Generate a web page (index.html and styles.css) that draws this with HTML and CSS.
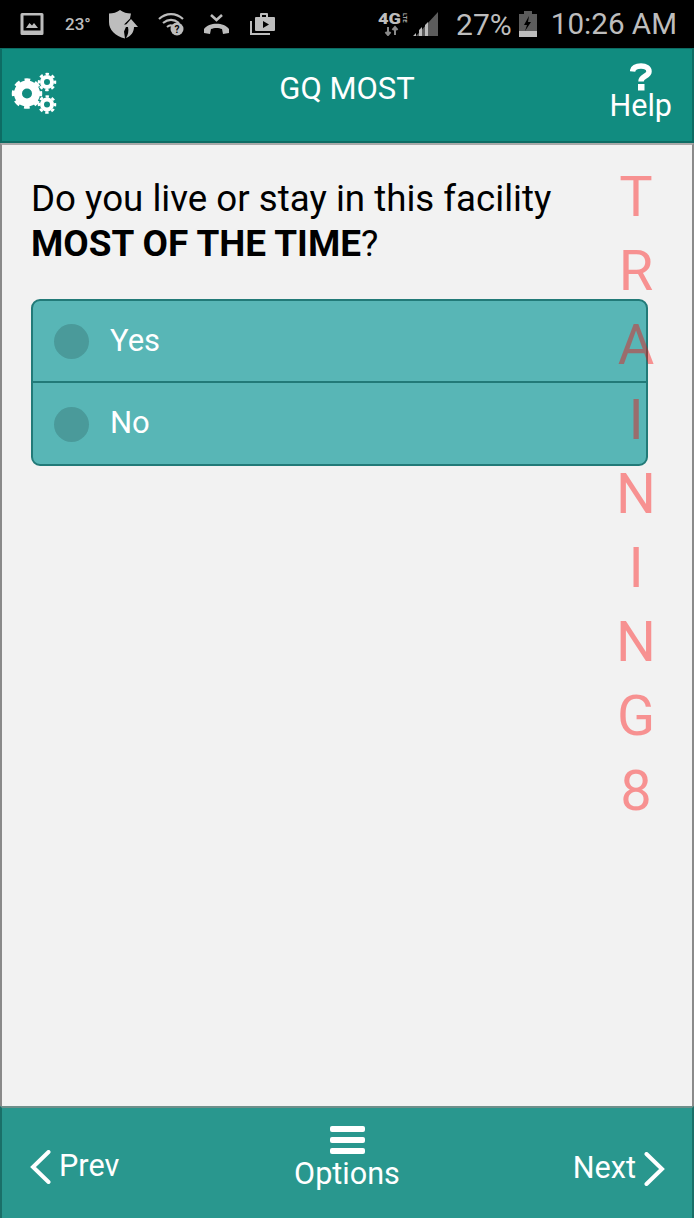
FILE: index.html
```
<!DOCTYPE html>
<html lang="en">
<head>
<meta charset="utf-8">
<title>GQ MOST</title>
<link rel="stylesheet" href="styles.css">
</head>
<body>
<div class="phone">
  <div class="status">
    <div class="status-left">
      <svg class="si pic" viewBox="0 0 24 24"><path fill="#bdbdbd" fill-rule="evenodd" d="M2 1h20a1.500 1.500 0 0 1 1.500 1.500v19a1.500 1.500 0 0 1-1.500 1.500H2a1.500 1.500 0 0 1-1.500-1.500v-19A1.500 1.500 0 0 1 2 1zm1.500 2.500v15h17v-15zM6 16l3.500-5 2.500 2.500 2-2.500 4 5z"/></svg>
      <span class="temp">23°</span>
      <svg class="si shield" viewBox="0 0 29 29"><path fill="#bdbdbd" d="M11 0c3 2.500 7 3.500 11 3.500l-1 5-6 6h3l-3 7 1 7C6 26 0 20 0 12V3.500C4 3.500 8 2.500 11 0z"/><path fill="#bdbdbd" d="M22 9l7 8h-4c0 5-3 9-8 11 2-3 3-7 2-11h-4z"/></svg>
      <svg class="si wifi" viewBox="0 0 26 24"><g fill="none" stroke="#bdbdbd" stroke-width="2.200"><path d="M1 7c7-6.500 17-6.500 24 0"/><path d="M5 11c5-4 11-4 16 0"/><path d="M9 15c2.500-2 5-2 7 0"/></g><circle cx="19" cy="17" r="6.500" fill="#bdbdbd"/><text x="19" y="21" class="q">?</text></svg>
      <svg class="si call" viewBox="0 0 25 20"><path fill="none" stroke="#bdbdbd" stroke-width="2.600" d="M7 1l5.500 5L18 1"/><path fill="#bdbdbd" d="M0 15c5-7 20-7 25 0v4l-6 1-1-5c-3-1.500-8-1.500-11 0l-1 5-6-1z"/></svg>
      <svg class="si play" viewBox="0 0 25 22"><path fill="none" stroke="#bdbdbd" stroke-width="2" d="M1 8v13h19"/><path fill="#bdbdbd" fill-rule="evenodd" d="M6 4h4V1q0-1 1-1h6q1 0 1 1v3h6q1 0 1 1v12q0 1-1 1H6q-1 0-1-1V5q0-1 1-1zm6-2v2h4V2zm1 6v7l6-3.500z"/></svg>
    </div>
    <div class="status-right">
      <svg class="si net" viewBox="0 -4 30 27"><text x="0" y="11" class="lte" textLength="23" lengthAdjust="spacingAndGlyphs">4G</text><text x="25" y="0" class="lte-small" transform="rotate(90 25 0)">LTE</text><path stroke="#8a8a8a" stroke-width="2" fill="none" d="M10 14v8M7.500 19l2.500 3 2.500-3M17 22v-8M14.500 17l2.500-3 2.500 3"/></svg>
      <svg class="si bars" viewBox="0 0 25 24"><path fill="#5c5c5c" d="M25 0v24H3z"/><path fill="#bdbdbd" d="M0 24h3v-3zM6 24h3v-9l-3 3zM12 24h3v-14l-3 3z"/></svg>
      <span class="pct">27%</span>
      <svg class="si batt" viewBox="0 0 18 26"><path fill="#5c5c5c" d="M0 3h5V0h8v3h5v18H0z"/><path fill="#bdbdbd" d="M0 20h18v6H0z"/><path fill="#000" d="M10 5L5 14h3l-2 6 6-9H9z"/></svg>
      <span class="clock">10:26 AM</span>
    </div>
  </div>

  <header class="head">
    <svg class="gears" viewBox="0 0 46 42">
      <g fill="none" stroke="#fff">
        <circle cx="16" cy="21.500" r="9" stroke-width="8"/>
        <circle cx="16" cy="21.500" r="13.500" stroke-width="3.500" stroke-dasharray="5.600 5" stroke-dashoffset="2.800"/>
        <circle cx="36" cy="10" r="5" stroke-width="4"/>
        <circle cx="36" cy="10" r="8" stroke-width="2.500" stroke-dasharray="3.400 2.880" stroke-dashoffset="1.700"/>
        <circle cx="36" cy="32.500" r="5" stroke-width="4"/>
        <circle cx="36" cy="32.500" r="8" stroke-width="2.500" stroke-dasharray="3.400 2.880" stroke-dashoffset="1.700"/>
      </g>
    </svg>
    <h1 class="title">GQ MOST</h1>
    <div class="help">
      <svg class="qmark" viewBox="0 0 22 28"><path fill="none" stroke="#fff" stroke-width="5.500" d="M2.500 8.500C3 4.500 6.500 3 11 3c5 0 8 2.300 8 5.500 0 5-8 4.500-8 10"/><path fill="#fff" d="M8 21h6.500v6.500H8z"/></svg>
      <span class="help-label">Help</span>
    </div>
  </header>

  <main class="body">
    <p class="question">Do you live or stay in this facility<br><b>MOST OF THE TIME</b>?</p>
    <div class="options">
      <div class="option"><span class="radio"></span><span class="option-label">Yes</span></div>
      <div class="option"><span class="radio"></span><span class="option-label">No</span></div>
    </div>
  </main>

  <footer class="foot">
    <div class="nav nav-prev">
      <svg class="chev" viewBox="0 0 21 34"><path fill="none" stroke="#fff" stroke-width="4" stroke-linecap="round" d="M18.500 2L3 17l15.500 15"/></svg>
      <span class="nav-label">Prev</span>
    </div>
    <div class="options-btn">
      <span class="burger"><i></i><i></i><i></i></span>
      <span class="nav-label options-label">Options</span>
    </div>
    <div class="nav nav-next">
      <span class="nav-label">Next</span>
      <svg class="chev" viewBox="0 0 21 34"><path fill="none" stroke="#fff" stroke-width="4" stroke-linecap="round" d="M2.500 2L18 17 2.500 32"/></svg>
    </div>
  </footer>

  <div class="watermark" aria-label="TRAINING 8">
    <span>T</span><span>R</span><span>A</span><span>I</span><span>N</span><span>I</span><span>N</span><span>G</span><span>8</span>
  </div>
</div>
</body>
</html>
```
FILE: styles.css
```
* { box-sizing: border-box; }
html, body { margin: 0; padding: 0; }
body { font-family: Roboto, "Liberation Sans", sans-serif; background: #f2f2f2; }
.phone { position: relative; width: 694px; height: 1218px; display: flex; flex-direction: column; overflow: hidden; }

.status { height: 48px; flex: none; background: #000; color: #bdbdbd; display: flex; align-items: center; justify-content: space-between; padding: 0 17px 0 20px; }
.status-left, .status-right { display: flex; align-items: center; }
.si { display: block; flex: none; }
.pic { width: 24px; height: 24px; margin-right: 21px; }
.temp { font-size: 17px; font-weight: 500; width: 44px; }
.shield { width: 29px; height: 29px; margin-right: 20px; }
.wifi { width: 26px; height: 24px; margin-right: 20px; }
.call { width: 25px; height: 20px; margin-right: 21px; }
.play { width: 25px; height: 22px; }
.q { font: 700 10px Roboto, sans-serif; fill: #000; text-anchor: middle; }
.lte { font: 900 15px Roboto, sans-serif; fill: #bdbdbd; }
.lte-small { font: 700 6px Roboto, sans-serif; fill: #bdbdbd; }
.net { width: 30px; height: 27px; margin-right: 5px; margin-bottom: 3px; }
.bars { width: 25px; height: 24px; margin-right: 18px; }
.pct { font-size: 30px; margin-right: 7px; }
.batt { width: 18px; height: 26px; margin-right: 14px; }
.clock { font-size: 29.600px; }

.head { height: 95px; flex: none; background: #118c80; border: 2px solid #0d6c64; border-top-width: 1px; display: flex; align-items: center; justify-content: space-between; padding: 0 20px 0 9px; position: relative; }
.gears { width: 46px; height: 42px; margin-bottom: 5px; }
.title { position: absolute; left: 0; right: 0; top: 22px; margin: 0; text-align: center; color: #fff; font-size: 31px; font-weight: 400; line-height: 36px; }
.help { display: flex; flex-direction: column; align-items: center; color: #fff; margin-bottom: 7px; }
.qmark { width: 22px; height: 28px; display: block; }
.help-label { font-size: 30.500px; line-height: 30px; }

.body { flex: 1; min-height: 0; background: #f2f2f2; border: 2px solid #8a8a8a; border-width: 0 2px; border-top: 2px solid #a9a9a9; padding: 31px 44px 0 29px; }
.question { margin: 0; font-size: 36.700px; line-height: 45px; color: #000; white-space: nowrap; }
.question b { font-weight: 700; font-size: 36.900px; }
.options { margin-top: 33px; border: 2px solid #227a78; border-radius: 9px; background: #58b6b6; overflow: hidden; }
.option { height: 80px; display: flex; align-items: center; padding-left: 21px; }
.option + .option { border-top: 2px solid #227a78; height: 83px; }
.radio { width: 35px; height: 35px; border-radius: 50%; background: #4a9a9a; flex: none; }
.option + .option .radio { position: relative; top: 1px; }
.option-label { color: #fff; font-size: 31px; margin-left: 21px; position: relative; bottom: 1px; }

.foot { height: 112px; flex: none; background: #29978e; border: 2px solid #1a6f68; border-width: 2px 2px 0; border-top-color: #6f8f8b; position: relative; }
.nav { display: flex; align-items: center; position: absolute; }
.nav-prev { left: 28px; top: 41px; gap: 8px; }
.nav-next { right: 27px; top: 43px; gap: 8px; }
.chev { width: 21px; height: 34px; display: block; }
.nav-label { color: #fff; font-size: 30.600px; }
.nav-prev .nav-label, .nav-next .nav-label { position: relative; bottom: 1px; }
.options-btn { position: absolute; left: 0; right: 0; top: 18px; display: flex; flex-direction: column; align-items: center; }
.burger { display: flex; flex-direction: column; gap: 5px; }
.burger i { display: block; width: 35px; height: 6px; border-radius: 2px; background: #fff; }
.options-label { line-height: 36px; margin-top: 2px; }

.watermark { position: absolute; left: 615px; top: 160px; width: 42px; display: flex; flex-direction: column; align-items: center; color: rgba(255,0,0,.4); font-size: 56px; line-height: 74.200px; pointer-events: none; }
```
